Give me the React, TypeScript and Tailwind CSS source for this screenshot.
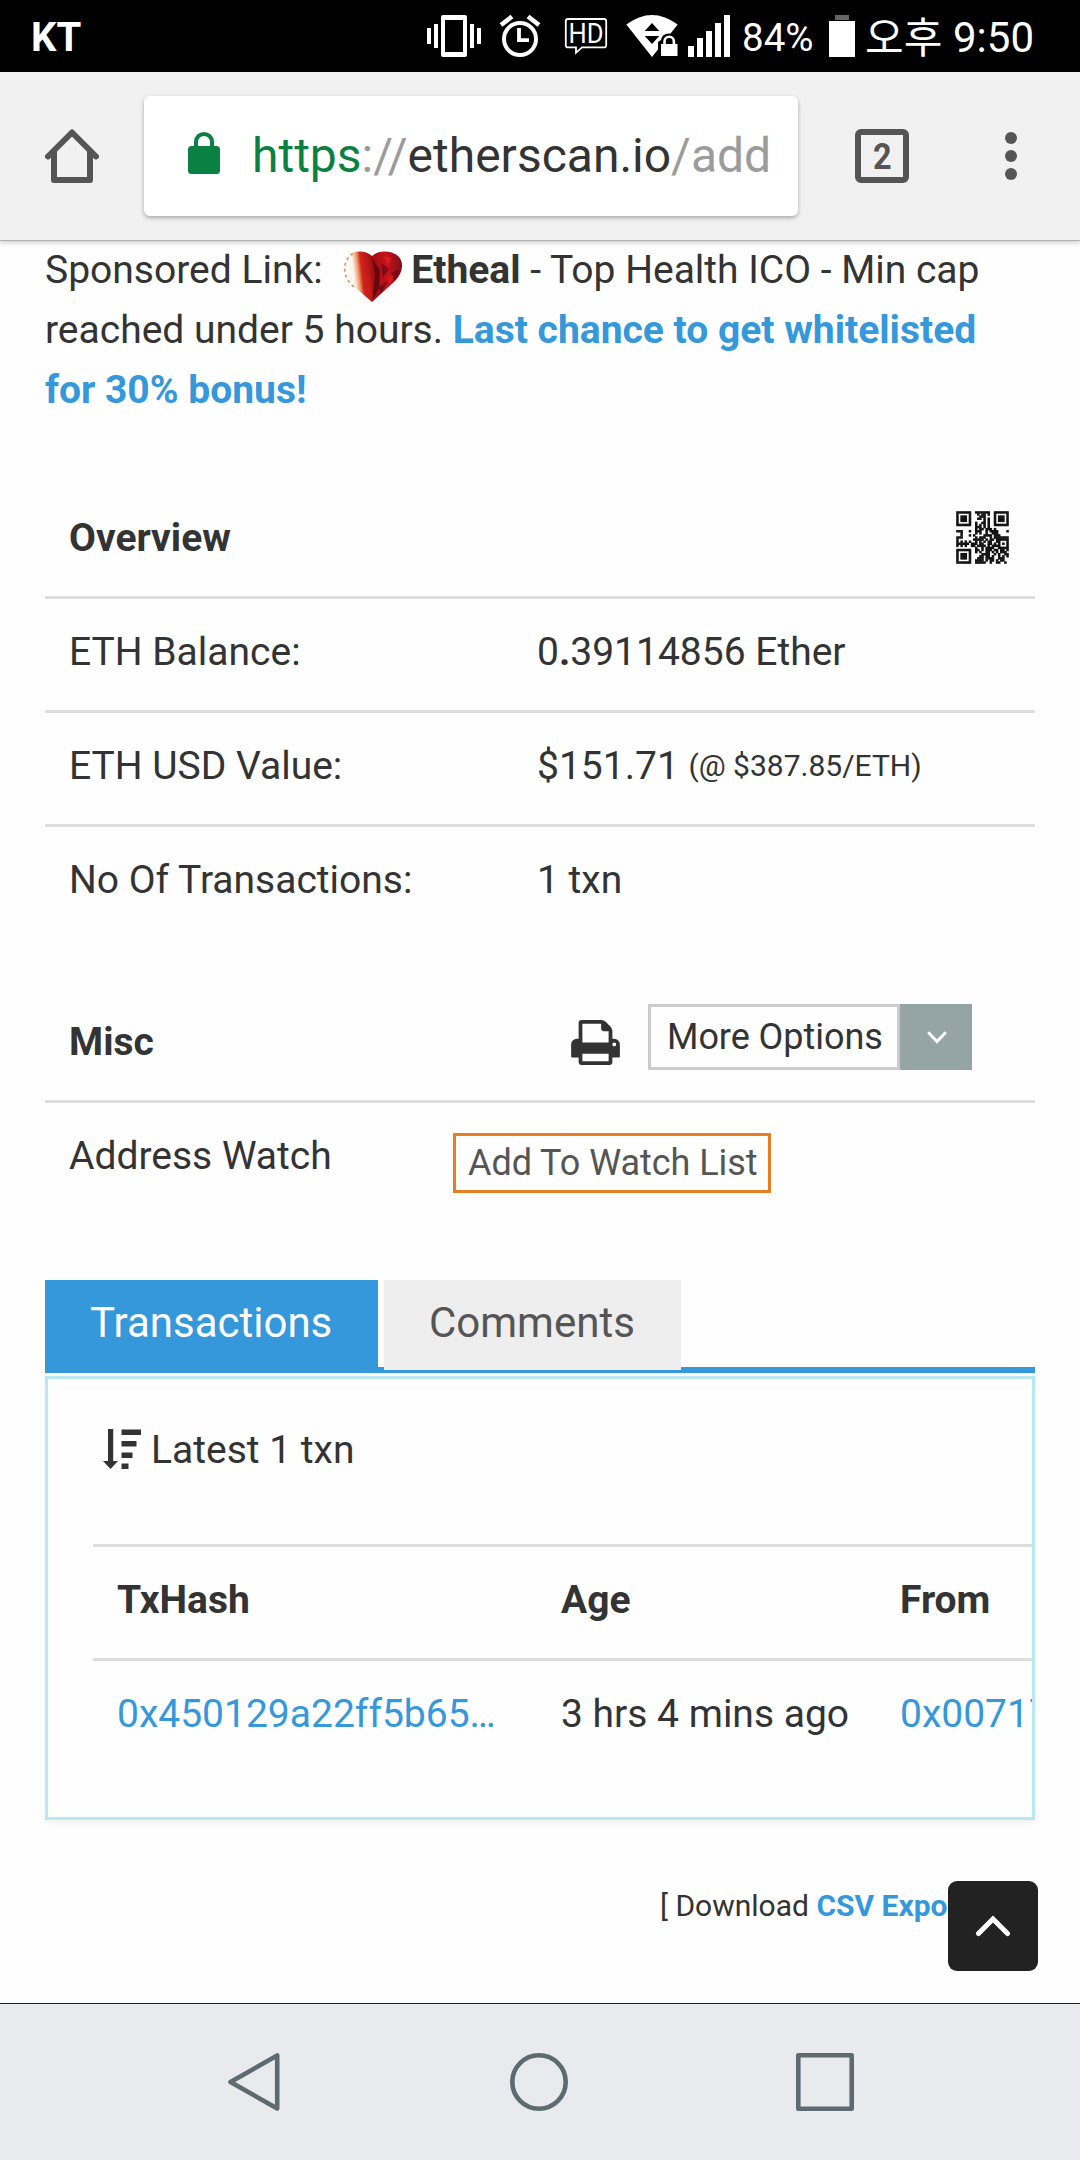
import type { ReactNode } from 'react'

const QR_ROWS = [
  '#######..#######..#######',
  '#.....#...#.##.#..#.....#',
  '#.###.#....###....#.###.#',
  '#.###.#...##.#.#..#.###.#',
  '#.###.#......#.#..#.###.#',
  '#.....#..#..##.#..#.....#',
  '#######..#.#.#.#..#######',
  '.........###.#.#.........',
  '.........#.##.###.#......',
  '###...#..###..#.####....#',
  '..#......#.#..#..###.....',
  '..#...#.#....####.###....',
  '###......#.###..#.#######',
  '#.......#####.#.##.######',
  '#.#.#.#..#.#.#.##..##...#',
  '######.###.##..##.#.#.#.#',
  '#.#.#..##.####.#.####...#',
  '.........#..#.####..#####',
  '#######..##.#.###.##.##.#',
  '#.....#..#.#..##.#.#.###.',
  '#.###.#.....####..#.#..##',
  '#.###.#....##.##.#..#.#.#',
  '#.###.#...###.####..###..',
  '#.....#..####.#.##.#.##..',
  '#######..#####..#..##..#.',
]

function StatusIcons() {
  return (
    <svg width="308" height="72" viewBox="424 0 308 72" fill="#fff" aria-hidden="true">
      {/* vibrate */}
      <path d="M427 28h4v16h-4zM434 24h4v24h-4zM470 24h4v24h-4zM477 28h4v16h-4z" />
      <path fillRule="evenodd" d="M443 15h22a2 2 0 0 1 2 2v38a2 2 0 0 1-2 2h-22a2 2 0 0 1-2-2V17a2 2 0 0 1 2-2zm2 5v32h18V20z" />
      {/* alarm */}
      <circle cx="520" cy="39" r="16" fill="none" stroke="#fff" strokeWidth="4" />
      <path d="M519 28v12.2h10" fill="none" stroke="#fff" strokeWidth="3.8" />
      <path d="M501 25l11-8.5M539 25l-11-8.5" stroke="#fff" strokeWidth="4.6" />
      {/* HD voice */}
      <path d="M568 19h36q2.200 0 2.200 2.200v24q0 2.200-2.200 2.200H582l-6 5.400v-5.400h-8q-2.200 0-2.200-2.200v-24q0-2.200 2.200-2.200z" fill="none" stroke="#fff" strokeWidth="1.8" />
      <text x="568.600" y="43" fontFamily="Roboto, sans-serif" fontSize="27" fontWeight="400" textLength="35" lengthAdjust="spacingAndGlyphs">HD</text>
      {/* wifi with lock */}
      <path d="M626.300 24.500Q652 5.500 677.700 24.500L652 57z" />
      <path d="M652 23l7.300 8h-14.600zM652 44l7.300-8h-14.600z" fill="#000" />
      <path d="M658 60V42l3-2q1-6.500 8-6.500t8.500 6V60z" fill="#000" />
      <path d="M661 44h16.500v12H661z" />
      <path d="M664.500 45v-3.500a4.700 4.700 0 0 1 9.400 0V45" fill="none" stroke="#fff" strokeWidth="2.600" />
      {/* signal */}
      <path d="M688 46h6v11h-6zM697 38h6v19h-6zM706 31h6v26h-6zM715 23h6v34h-6zM724 15h6v42h-6z" />
    </svg>
  )
}

function StatusBar() {
  return (
    <div className="h-[72px] bg-black text-white flex items-center shrink-0">
      <span className="ml-[31px] w-[393px] text-[40px] leading-[72px] pt-[4px] font-bold">KT</span>
      <StatusIcons />
      <span className="ml-[10px] w-[87px] text-[38.5px] leading-[72px] pt-[3px]">84%</span>
      <svg width="26" height="42" viewBox="0 0 26 42" aria-hidden="true">
        <path d="M6 0h14v5H6z" fill="#666" />
        <path d="M0 6h26v36H0z" fill="#fff" />
      </svg>
      <span className="ml-[10px] flex items-center leading-[72px] whitespace-nowrap">
        <span className="w-[88px] -mt-[2px] text-[42px] font-normal font-['Noto_Sans_CJK_KR',sans-serif]">오후</span>
        <span className="text-[42px] pt-[4px]">9:50</span>
      </span>
    </div>
  )
}

function BrowserBar() {
  return (
    <div className="relative z-10 h-[169px] bg-[#f1f1f1] border-b border-[#b3b3b3] shadow-[0_2px_4px_rgba(0,0,0,0.18)] flex items-start pt-6 shrink-0">
      <svg className="ml-[45px] mt-[33px]" width="54" height="54" viewBox="0 0 54 54" fill="none" stroke="#555" strokeWidth="6" strokeLinecap="round" strokeLinejoin="round" aria-hidden="true">
        <path d="M3 27.500L27 3.500l24 24" />
        <path d="M9 23v28h36V23" />
      </svg>
      <div className="ml-[45px] w-[654px] h-[120px] bg-white rounded-md shadow-[0_2px_4px_rgba(0,0,0,0.3)] flex items-center">
        <svg className="ml-11 -mt-[6px]" width="32" height="42" viewBox="0 0 32 42" aria-hidden="true">
          <rect y="14" width="32" height="28" rx="3.500" fill="#0b8043" />
          <path d="M8 16v-6.500a8 7.500 0 0 1 16 0V16" fill="none" stroke="#0b8043" strokeWidth="4" />
        </svg>
        <span className="ml-8 text-[48px] leading-[60px] whitespace-nowrap text-[#9b9b9b]">
          <span className="text-[#0b8043]">https</span>://<span className="text-[#333]">etherscan.io</span>/add
        </span>
      </div>
      <div className="ml-[57px] mt-[33px] size-[54px] border-[6px] border-[#555] rounded-md flex items-center justify-center text-[#555] text-[36px] font-bold">
        <span className="scale-x-90 pt-px">2</span>
      </div>
      <svg className="ml-24 mt-9" width="12" height="48" viewBox="0 0 12 48" fill="#555" aria-hidden="true">
        <circle cx="6" cy="6" r="6" />
        <circle cx="6" cy="24" r="6" />
        <circle cx="6" cy="42" r="6" />
      </svg>
    </div>
  )
}

function HeartLogo() {
  return (
    <svg className="inline-block ml-[11px] mr-2 -my-3 align-[-18px] relative -top-[10px]" width="60" height="52" viewBox="0 0 60 52" aria-hidden="true">
      <defs>
        <linearGradient id="heart" x1="0" x2="1" y1="0.300" y2="0.200">
          <stop offset="0" stopColor="#fff" />
          <stop offset="0.160" stopColor="#fdf3ec" />
          <stop offset="0.240" stopColor="#ee9a66" />
          <stop offset="0.300" stopColor="#d3251c" />
          <stop offset="0.500" stopColor="#a50d12" />
          <stop offset="0.750" stopColor="#c5121a" />
          <stop offset="1" stopColor="#7a0e18" />
        </linearGradient>
      </defs>
      <path d="M29 5C22-1 10-1 4 6c-6 9-4 19 3 26l22 19 23-21c8-8 9-18 4-24C49-1 36-1 29 5z" fill="url(#heart)" />
      <path d="M10 2.500C4 6 .500 14 2 22q2 8 9 14" fill="none" stroke="#e08a60" strokeWidth="1.600" strokeDasharray="3 3" />
      <path d="M29 7l3 17-3 27 7-14 1-18z" fill="#4d0710" opacity=".75" />
      <path d="M18 10l7 14-4 12 8 12-2-22z" fill="#c9201a" opacity=".7" />
      <path d="M38 12l8 6-6 9zM48 22l9-4-5 12zM36 36l9-6-7 13z" fill="#5a0810" opacity=".6" />
      <path d="M40 5l9 2-4 7zM44 27l7-3-4 9z" fill="#ea2328" opacity=".6" />
    </svg>
  )
}

function QrIcon() {
  return (
    <svg width="53" height="53" viewBox="-0.2 -0.2 25.4 25.4" aria-hidden="true">
      {QR_ROWS.map((row, y) =>
        row.split('').map((cell, x) =>
          cell === '#' ? <rect key={`${x}-${y}`} x={x - 0.1} y={y - 0.1} width="1.200" height="1.200" fill="#111" /> : null,
        ),
      )}
    </svg>
  )
}

function PrintIcon() {
  return (
    <svg width="49" height="45" viewBox="0 128 1664 1536" fill="#333" aria-hidden="true">
      <path d="M384 1536h896v-256h-896v256zm0-640h896v-384h-160q-40 0-68-28t-28-68v-160h-640v640zm1152 64q0-26-19-45t-45-19-45 19-19 45 19 45 45 19 45-19 19-45zm128 0v416q0 13-9.500 22.500t-22.500 9.500h-224v160q0 40-28 68t-68 28h-960q-40 0-68-28t-28-68v-160h-224q-13 0-22.500-9.500t-9.500-22.500v-416q0-79 56.500-135.500t135.500-56.500h64v-544q0-40 28-68t68-28h672q40 0 88 20t76 48l152 152q28 28 48 76t20 88v256h64q79 0 135.500 56.500t56.500 135.500z" />
    </svg>
  )
}

function SortIcon() {
  return (
    <svg width="39" height="40" viewBox="0 0 39 40" fill="#333" aria-hidden="true">
      <path d="M5 0h5.200v32H15l-7.400 8L0 32h5zM18.500.500H38V6H18.500zM18.500 12h15v5.500h-15zM18.500 23.500h11V29h-11zM18.500 34.500h7V40h-7z" />
    </svg>
  )
}

function Row({ label, children }: { label: string; children: ReactNode }) {
  return (
    <div className="h-[114px] border-t-[3px] border-[#ddd] flex pt-[22px] pl-6 leading-[63px]">
      <span className="w-[468px]">{label}</span>
      <span className="whitespace-nowrap">{children}</span>
    </div>
  )
}

function Overview() {
  return (
    <section className="mt-[73px]">
      <div className="h-[114px] flex justify-between pl-6 pr-[26px] pt-[25px] leading-[63px]">
        <span className="font-bold">Overview</span>
        <span className="pt-1">
          <QrIcon />
        </span>
      </div>
      <Row label="ETH Balance:">
        0<b>.</b>39114856 Ether
      </Row>
      <Row label="ETH USD Value:">
        $151.71 <span className="text-[30px] align-[3px] leading-none">(@ $387.85/ETH)</span>
      </Row>
      <Row label="No Of Transactions:">1 txn</Row>
    </section>
  )
}

function Misc() {
  return (
    <section className="mt-[48px]">
      <div className="h-[114px] flex pl-6 leading-[63px]">
        <span className="w-[502px] pt-[25px] font-bold">Misc</span>
        <span className="pt-[34px]">
          <PrintIcon />
        </span>
        <button type="button" className="ml-7 mt-[18px] h-[66px] flex text-[36px] leading-[60px]">
          <span className="w-[252px] h-full border-[3px] border-[#ccc] pl-4 text-left tracking-[-0.05px] whitespace-nowrap">More Options</span>
          <span className="w-[72px] h-full bg-[#95a5a6] flex items-center justify-center">
            <svg className="ml-0.5" width="20" height="13" viewBox="0 0 20 13" fill="none" stroke="#fff" strokeWidth="3" aria-hidden="true">
              <path d="M1.200 1.200L10 10.500l8.800-9.300" />
            </svg>
          </span>
        </button>
      </div>
      <div className="h-[114px] border-t-[3px] border-[#ddd] flex pl-6 leading-[63px]">
        <span className="w-[384px] pt-[22px]">Address Watch</span>
        <a className="mt-[30px] w-[318px] h-[60px] border-[3px] border-[#e67e22] pl-3 text-[36px] leading-[55px] tracking-[-0.05px] text-[#555] whitespace-nowrap">
          Add To Watch List
        </a>
      </div>
    </section>
  )
}

function Transactions() {
  return (
    <section className="mt-[66px]">
      <div className="h-[93px] flex items-start gap-1.5 text-[42px] leading-[86px] bg-linear-to-t from-[#3498db] from-[6px] to-[#fefefe] to-[6px]">
        <div className="w-[333px] h-[93px] bg-[#3498db] text-white pl-[45px]">Transactions</div>
        <div className="w-[297px] h-[90px] bg-[#eee] text-[#555] pl-[45px]">Comments</div>
      </div>
      <div className="mt-[3px] h-[444px] border-[3px] border-[#b9e8f2] shadow-[0_3px_6px_rgba(0,0,0,0.06)] overflow-hidden">
        <div className="h-[165px] pl-[55px] flex items-start">
          <span className="mt-[50px]">
            <SortIcon />
          </span>
          <span className="ml-[9px] mt-[41px] leading-[60px]">Latest 1 txn</span>
        </div>
        <div className="ml-[45px] h-[114px] border-t-[3px] border-[#ddd] pl-6 pt-[22px] leading-[63px] flex whitespace-nowrap font-bold">
          <span className="w-[444px] shrink-0">TxHash</span>
          <span className="w-[339px] shrink-0">Age</span>
          <span className="shrink-0">From</span>
        </div>
        <div className="ml-[45px] border-t-[3px] border-[#ddd] pl-6 pt-[22px] leading-[63px] flex whitespace-nowrap">
          <span className="w-[444px] shrink-0 text-[#3498db]">0x450129a22ff5b65…</span>
          <span className="w-[339px] shrink-0">3 hrs 4 mins ago</span>
          <span className="shrink-0 text-[#3498db]">0x00717</span>
        </div>
      </div>
    </section>
  )
}

export default function App() {
  return (
    <div className="w-[1080px] h-[2160px] overflow-hidden bg-[#fefefe] flex flex-col text-[39px] text-[#333] font-['Roboto','Noto_Sans_CJK_KR',sans-serif]">
      <StatusBar />
      <BrowserBar />
      <main className="relative h-[1762px] shrink-0 overflow-hidden px-[45px]">
        <p className="h-[168px] leading-[59.6px] whitespace-nowrap">
          Sponsored Link: <HeartLogo />
          <b>Etheal</b> - Top Health ICO - Min cap
          <br />
          reached under 5 hours. <b className="text-[#3498db]">Last chance to get whitelisted</b>
          <br />
          <b className="text-[#3498db]">for 30% bonus!</b>
        </p>
        <Overview />
        <Misc />
        <Transactions />
        <p className="mt-[65px] pl-[615px] text-[30px] leading-[42px] whitespace-nowrap">
          [ Download <b className="text-[#3498db]">CSV Export</b> ]
        </p>
        <button type="button" aria-label="Back to top" className="absolute right-[42px] bottom-8 size-[90px] rounded-[9px] bg-[#222] flex items-center justify-center">
          <svg width="36" height="22" viewBox="0 0 36 22" fill="none" stroke="#fff" strokeWidth="5" strokeLinecap="round" aria-hidden="true">
            <path d="M3.500 18.500L18 4l14.500 14.500" />
          </svg>
        </button>
      </main>
      <nav className="h-[157px] shrink-0 bg-[#e9eaee] border-t border-[#222]">
        <svg width="1080" height="156" viewBox="0 2004 1080 156" fill="none" stroke="#5c6a72" strokeWidth="4.600" strokeLinejoin="round" aria-hidden="true">
          <path d="M277.200 2055.500v53L230.500 2082z" />
          <circle cx="539" cy="2082" r="26.700" />
          <path d="M798.300 2055.300h53.400v53.400h-53.400z" />
        </svg>
      </nav>
    </div>
  )
}
